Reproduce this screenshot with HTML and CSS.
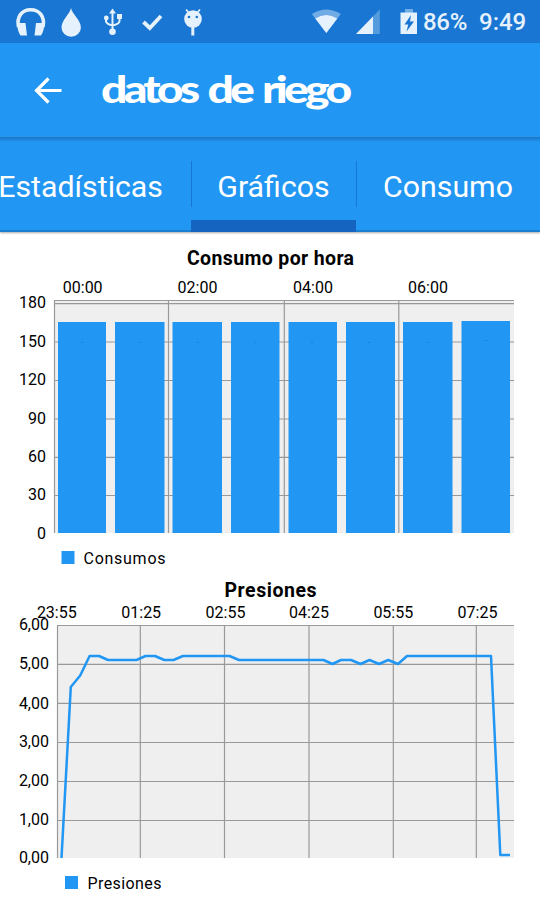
FILE: index.html
```html
<!DOCTYPE html>
<html lang="es">
<head>
    <meta charset="UTF-8">
    <meta name="viewport" content="width=device-width, initial-scale=1.0">
    <title>Datos de riego</title>
    <link rel="stylesheet" href="styles.css">
</head>
<body>
    <header class="status-bar">
        <svg class="status-left" width="220" height="43" viewBox="0 0 220 43">
            <!-- headphones -->
            <path d="M18.500 27c-2-10 3-17.200 12.200-17.200S45 17 43 27" fill="none" stroke="#e5f1fc" stroke-width="3.600"/>
            <path d="M17 23h8.500l1.500 12.500h-6.500q-3-4-3.500-12.500zM44.500 23H36l-1.500 12.500H41q3-4 3.500-12.500z" fill="#e5f1fc"/>
            <!-- drop -->
            <path d="M71 8C70 14 61.500 20 61.500 27.500a9.700 9.300 0 0 0 19.400 0C80.900 20 72 14 71 8z" fill="#e5f1fc"/>
            <!-- usb -->
            <g fill="none" stroke="#e5f1fc" stroke-width="2">
                <path d="M112.500 12v20M106 18v3q0 3 6.500 4.500M119.500 17v4q0 3-7 4.500"/>
            </g>
            <path d="M112.500 8.500l3.500 5h-7zM117 14h5v5h-5z" fill="#e5f1fc"/>
            <circle cx="106.300" cy="18" r="2.400" fill="#e5f1fc"/>
            <circle cx="112.500" cy="31.800" r="3.300" fill="#e5f1fc"/>
            <!-- check -->
            <path d="M143.500 22l6.300 6L161 16" fill="none" stroke="#e5f1fc" stroke-width="3.800"/>
            <!-- android -->
            <circle cx="193" cy="19" r="8.800" fill="#e5f1fc"/>
            <path d="M189 13l-3-3.500M197 13l3-3.500" stroke="#e5f1fc" stroke-width="1.700"/>
            <path d="M192.800 26v9.500" stroke="#e5f1fc" stroke-width="3"/>
            <circle cx="189" cy="17" r="1.300" fill="#1976d2"/>
            <circle cx="196.800" cy="17" r="1.300" fill="#1976d2"/>
        </svg>
        <div class="status-right">
            <svg width="110" height="43" viewBox="310 0 110 43">
                <!-- wifi -->
                <path d="M326.300 33L311.800 14q14.500-9 29 0z" fill="#6fabe5"/>
                <path d="M326.300 33L315.300 18.500q11-7 22 0z" fill="#e5f1fc"/>
                <!-- signal -->
                <path d="M379.800 9.500V34H356z" fill="#559cdf"/>
                <path d="M373 16.500V34H356z" fill="#e5f1fc"/>
                <!-- battery -->
                <path d="M405 9h8v4h-8z" fill="#6fabe5"/>
                <path d="M400.500 12.500H417V34h-16.500z" fill="#e5f1fc"/>
                <path d="M411 15l-6.500 9.500h3.700l-1.700 7 7.500-10h-4z" fill="#1976d2"/>
            </svg>
            <span class="battery-level">86%</span>
            <span class="clock">9:49</span>
        </div>
    </header>

    <div class="toolbar">
        <svg class="back" width="28" height="28" viewBox="0 0 28 28">
            <path d="M28.500 13.500H3.500M15.500 1.500L3.500 13.500l12 12" fill="none" stroke="#fff" stroke-width="3.200"/>
        </svg>
        <h1 class="title">datos de riego</h1>
    </div>

    <nav class="tabs">
        <a class="tab tab-first">Estadísticas</a>
        <a class="tab tab-active">Gráficos</a>
        <a class="tab tab-last">Consumo</a>
    </nav>

    <main class="charts">
        <svg class="chart" width="540" height="338" viewBox="0 234 540 338">
            <text class="chart-title" x="270.500" y="265" textLength="167">Consumo por hora</text>
            <rect class="plot" x="54" y="300" width="460" height="233"/>
            <path class="grid" d="M54 300.500H514M54 303.700H514M54 342H514M54 380.500H514M54 419H514M54 457.300H514M54 495.500H514M54.500 300V533M168.500 300V533M284.300 300V533M398.800 300V533"/>
            <g class="bars">
                <rect x="58" y="322" width="48" height="211"/>
                <rect x="115" y="322" width="49.500" height="211"/>
                <rect x="172.500" y="322" width="49.500" height="211"/>
                <rect x="231" y="322" width="48.500" height="211"/>
                <rect x="288.500" y="322" width="48.500" height="211"/>
                <rect x="346" y="322" width="49" height="211"/>
                <rect x="403" y="322" width="49.500" height="211"/>
                <rect x="461.500" y="321" width="48.500" height="212"/>
            </g>
            <path class="marks" d="M81 342.500h2M139 342.500h2M197 342.500h2M254.500 342.500h2M311 342.500h2M368 342.500h2M427 342.500h2M484.500 340.500h3"/>
            <g class="x-labels">
                <text x="82.700" y="293">00:00</text>
                <text x="197.500" y="293">02:00</text>
                <text x="313" y="293">04:00</text>
                <text x="428" y="293">06:00</text>
            </g>
            <g class="y-labels">
                <text x="46" y="308">180</text>
                <text x="46" y="347">150</text>
                <text x="46" y="385">120</text>
                <text x="46" y="423.500">90</text>
                <text x="46" y="462">60</text>
                <text x="46" y="500">30</text>
                <text x="46" y="538.500">0</text>
            </g>
            <rect class="swatch" x="61.500" y="551" width="13" height="13"/>
            <text class="legend" x="83.500" y="564" textLength="82">Consumos</text>
        </svg>

        <svg class="chart" width="540" height="328" viewBox="0 572 540 328">
            <text class="chart-title" x="270.500" y="596.500" textLength="92">Presiones</text>
            <rect class="plot" x="57" y="625" width="457" height="233"/>
            <path class="grid" d="M57 625.500H514M57 664.300H514M57 703.300H514M57 742.500H514M57 781.500H514M57 820.500H514M57.500 625V858M140.300 625V858M224.500 625V858M309 625V858M393.300 625V858M476.300 625V858"/>
            <polyline class="line" points="61.500,858 70.800,687 80.200,675.500 89.600,656 99,656 108,660 136.500,660 145.500,656 155,656 164.300,660 173.500,660 183,656 229.500,656 239,660 323.500,660 332.500,664 341,660 351,660 360.500,664 369.500,660 379,664 388.300,660 398,664 407,656 491,656 500.300,855 510,855"/>
            <g class="x-labels">
                <text x="56.800" y="618">23:55</text>
                <text x="141.200" y="618">01:25</text>
                <text x="225.500" y="618">02:55</text>
                <text x="309" y="618">04:25</text>
                <text x="393.300" y="618">05:55</text>
                <text x="477.500" y="618">07:25</text>
            </g>
            <g class="y-labels">
                <text x="49" y="630">6,00</text>
                <text x="49" y="669">5,00</text>
                <text x="49" y="708.500">4,00</text>
                <text x="49" y="746.500">3,00</text>
                <text x="49" y="786">2,00</text>
                <text x="49" y="825">1,00</text>
                <text x="49" y="863">0,00</text>
            </g>
            <rect class="swatch" x="65" y="876" width="13" height="13"/>
            <text class="legend" x="87.500" y="889" textLength="74">Presiones</text>
        </svg>
    </main>
</body>
</html>
```
FILE: styles.css
```css
body {
    margin: 0;
    width: 540px;
    height: 900px;
    overflow: hidden;
    background-color: #fff;
    font-family: Roboto, sans-serif;
}

svg {
    display: block;
}

.status-bar {
    display: flex;
    justify-content: space-between;
    height: 43px;
    background-color: #1976d2;
    color: #e5f1fc;
}

.status-right {
    display: flex;
    align-items: center;
    width: 230px;
    font-size: 24px;
    font-weight: 500;
    line-height: 43px;
    padding-top: 2px;
    height: 41px;
}

.status-right svg {
    margin-top: -2px;
}

.battery-level {
    width: 56px;
    margin-left: 3px;
    letter-spacing: -0.3px;
}

.toolbar {
    display: flex;
    align-items: center;
    height: 94px;
    padding-left: 33px;
    background-color: #2196f3;
}

.back {
    margin-top: 1px;
    overflow: visible;
}

.title {
    margin: -3px 0 0 40px;
    color: #fff;
    font-family: Lato, sans-serif;
    font-size: 37px;
    font-weight: 900;
    line-height: 40px;
    letter-spacing: -3px;
    word-spacing: 3px;
    white-space: nowrap;
    transform: scaleX(1.25);
    transform-origin: left center;
}

.tabs {
    display: flex;
    height: 95px;
    background: linear-gradient(#1976c4, #2196f3 5px);
    box-shadow: inset 0 -2px 0 #1b7fd1, 0 1px 2px #aaa;
}

.tab {
    box-sizing: border-box;
    height: 95px;
    color: #fff;
    font-size: 30.3px;
    line-height: 100px;
    text-align: center;
}

.tab-first {
    display: flex;
    justify-content: flex-end;
    width: 191px;
    padding-right: 28px;
}

.tab-active {
    width: 165px;
    background: linear-gradient(#1976d2, #1976d2) 0 24px / 1px 46px no-repeat;
    border-bottom: 12px solid #1565c0;
}

.tab-last {
    width: 184px;
    background: linear-gradient(#1976d2, #1976d2) 0 24px / 1px 46px no-repeat;
}

.charts {
    padding-top: 2px;
}

.chart-title {
    font-size: 19.5px;
    font-weight: 700;
    text-anchor: middle;
}

.plot {
    fill: #efefef;
}

.grid {
    fill: none;
    stroke: #999;
    stroke-width: 1.2;
}

.bars rect,
.swatch {
    fill: #2196f3;
}

.marks {
    stroke: #1b82d6;
}

.x-labels {
    font-size: 16px;
    text-anchor: middle;
}

.y-labels {
    font-size: 16px;
    text-anchor: end;
}

.legend {
    font-size: 16px;
}

.line {
    fill: none;
    stroke: #2196f3;
    stroke-width: 2.5;
    stroke-linejoin: round;
}
```
